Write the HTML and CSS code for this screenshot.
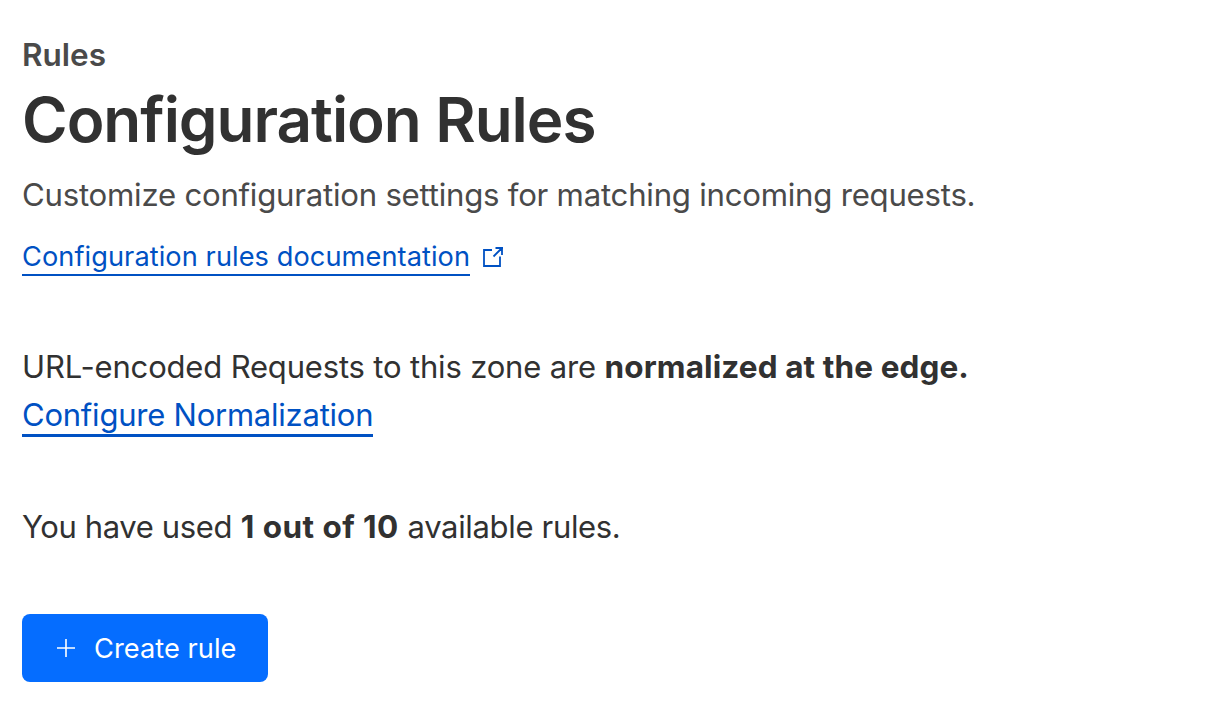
FILE: index.html
```html
<!DOCTYPE html>
<html lang="en">
<head>
<meta charset="utf-8">
<title>Configuration Rules</title>
<link rel="stylesheet" href="styles.css">
</head>
<body>
<main class="page">
  <header class="header">
    <p class="eyebrow">Rules</p>
    <h1 class="title">Configuration Rules</h1>
    <p class="lead">Customize configuration settings for matching incoming requests.</p>
    <p class="docs"><a class="docs-link" href="#">Configuration rules documentation</a>
      <svg class="external" viewBox="0 0 22 22" aria-hidden="true"><path d="M10 4H2v16h16v-9.5M13.5 2H21M20 1.5V9M20 2l-8.5 8.5"/></svg></p>
  </header>
  <section class="normalization">
    <p class="line"><span class="norm-text">URL-encoded Requests to this zone are</span> <strong class="norm-bold">normalized at the edge.</strong></p>
    <p class="line"><a class="norm-link" href="#">Configure Normalization</a></p>
  </section>
  <p class="line usage"><span class="usage-text">You have used</span> <strong class="usage-bold">1 out of 10</strong> <span class="usage-rest">available rules.</span></p>
  <button class="create" type="button">
    <svg class="plus" viewBox="0 0 20 20" aria-hidden="true"><path d="M10 1v18M1 10h18"/></svg>
    <span class="create-text">Create rule</span>
  </button>
</main>
</body>
</html>
```
FILE: styles.css
```css
* { box-sizing: border-box; }
body { margin: 0; background: #fff; color: #313131; font-family: Inter, "Liberation Sans", sans-serif; }
p, h1 { margin: 0; white-space: nowrap; }
.page { padding: 31px 22px; }
.header { display: flex; flex-direction: column; }
.eyebrow { font-size: 31.5px; line-height: 48px; font-weight: 600; letter-spacing: 0; color: #4a4a4a; }
.title { margin-top: 1px; font-size: 62px; line-height: 80px; font-weight: 600; letter-spacing: -1.04px; }
.lead { margin-top: 11px; font-size: 31.2px; line-height: 48px; letter-spacing: -0.25px; color: #4a4a4a; }
.docs { display: flex; align-items: center; gap: 12px; height: 36px; margin-top: 21px; font-size: 27.2px; }
.docs-link { height: 36px; line-height: 34px; letter-spacing: 0.07px; border-bottom: 2px solid #0051c3; color: #0051c3; text-decoration: none; }
.external { width: 22px; height: 22px; margin-bottom: 3px; fill: none; stroke: #0051c3; stroke-width: 1.8; }
.normalization { margin-top: 67px; }
.line { height: 48px; font-size: 31px; line-height: 48px; }
.norm-text { letter-spacing: -0.17px; }
.norm-bold { font-size: 31.5px; letter-spacing: 0.1px; }
.norm-link { display: inline-block; height: 46px; line-height: 48px; letter-spacing: -0.23px; border-bottom: 3px solid #0051c3; color: #0051c3; text-decoration: none; }
.usage { margin-top: 64px; }
.usage-text { letter-spacing: -0.38px; }
.usage-bold { font-size: 31.5px; letter-spacing: 0.45px; }
.usage-rest { letter-spacing: -0.33px; }
.create { display: flex; align-items: center; gap: 18px; width: 246px; height: 68px; margin-top: 63px; padding: 0 34px; border: 0; border-radius: 8px; background: #056dff; color: #fff; font-family: inherit; font-size: 27.2px; white-space: nowrap; }
.create-text { padding-top: 1px; letter-spacing: 0.05px; }
.plus { width: 20px; height: 20px; flex: none; fill: none; stroke: #fff; stroke-width: 1.6; }
```
